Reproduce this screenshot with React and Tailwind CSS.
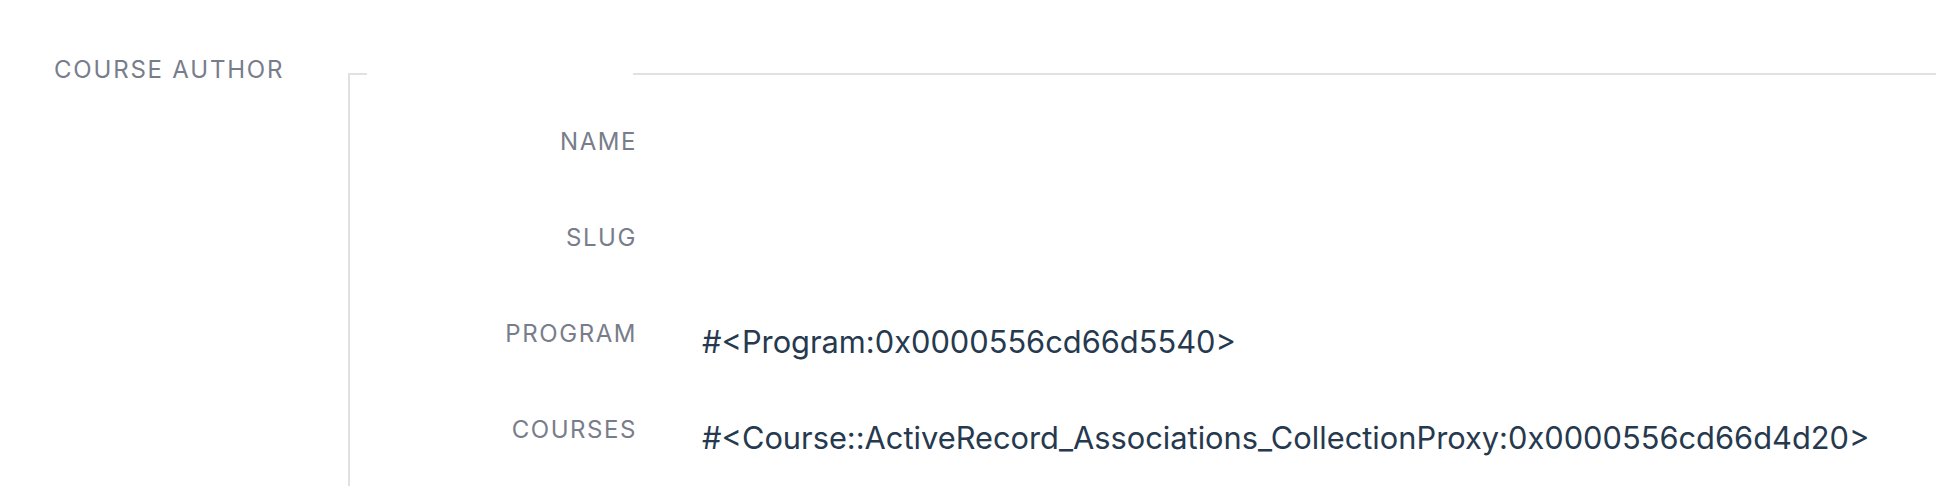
import React from "react";

const rows = [
  { label: "NAME", value: "" },
  { label: "SLUG", value: "" },
  { label: "PROGRAM", value: "#<Program:0x0000556cd66d5540>" },
  { label: "COURSES", value: "#<Course::ActiveRecord_Associations_CollectionProxy:0x0000556cd66d4d20>" },
];

export default function App() {
  return (
    <div className="w-[1936px] h-[486px] overflow-hidden bg-white font-['Inter',sans-serif] flex items-start">
      <div className="w-[348px] shrink-0 pt-[58px] pl-[54px]">
        <div className="text-[24px] leading-none tracking-[0.075em] text-[#787d8b]">COURSE AUTHOR</div>
      </div>
      <div className="flex-1 mt-[73px] h-[413px] border-l-2 border-[#e1e1e1] flex flex-col">
        <div className="flex h-[2px]">
          <div className="w-[17px] border-t-2 border-[#e1e1e1]" />
          <div className="w-[266px]" />
          <div className="flex-1 border-t-2 border-[#e1e1e1]" />
        </div>
        <div className="pt-[55px] flex flex-col gap-[72px]">
          {rows.map((r) => (
            <div key={r.label} className="flex items-start h-[24px]">
              <div className="w-[287px] shrink-0 text-right text-[24px] leading-none tracking-[0.065em] text-[#787d8b]">
                {r.label}
              </div>
              <div className="ml-[65px] mt-[5px] text-[30.8px] leading-none text-[#26394e] whitespace-nowrap">
                {r.value}
              </div>
            </div>
          ))}
        </div>
      </div>
    </div>
  );
}
